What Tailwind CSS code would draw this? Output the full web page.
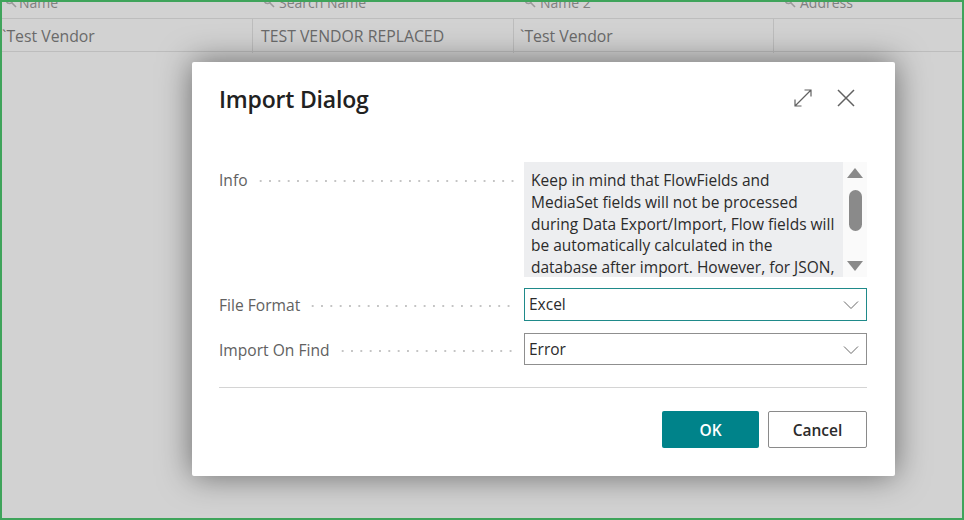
<!DOCTYPE html>
<html lang="en">
<head>
  <meta charset="UTF-8">
  <title>Import Dialog</title>
  <script src="https://cdn.jsdelivr.net/npm/@tailwindcss/browser@4"></script>
</head>
<body class="w-[964px] h-[520px] overflow-hidden font-['Open_Sans','Noto_Sans',sans-serif]">
  <div class="relative w-full h-full border-2 border-[#3fa45b] bg-[#d2d2d2] overflow-hidden">

    <!-- Grid behind the dialog -->
    <div class="-mt-[13px] text-[#6a6a6a]">
      <div class="grid grid-cols-[251px_261px_260px_1fr] h-[30px] border-b border-[#bdbdbd] text-[14px] leading-[27px] text-[#808080]">
        <div class="flex items-start gap-[2px] pl-[3px]">
          <svg class="w-[12px] h-[12px] mt-[7px]" viewBox="0 0 12 12" fill="none" stroke="#9a9a9a" stroke-width="1.6"><circle cx="4.5" cy="4.5" r="3"/><path d="M7 7l4 4"/></svg>
          <span>Name</span>
        </div>
        <div class="flex items-start gap-1 pl-[10px]">
          <svg class="w-[12px] h-[12px] mt-[7px]" viewBox="0 0 12 12" fill="none" stroke="#9a9a9a" stroke-width="1.6"><circle cx="4.5" cy="4.5" r="3"/><path d="M7 7l4 4"/></svg>
          <span>Search Name</span>
        </div>
        <div class="flex items-start gap-1 pl-[10px]">
          <svg class="w-[12px] h-[12px] mt-[7px]" viewBox="0 0 12 12" fill="none" stroke="#9a9a9a" stroke-width="1.6"><circle cx="4.5" cy="4.5" r="3"/><path d="M7 7l4 4"/></svg>
          <span>Name 2</span>
        </div>
        <div class="flex items-start gap-1 pl-[10px]">
          <svg class="w-[12px] h-[12px] mt-[7px]" viewBox="0 0 12 12" fill="none" stroke="#9a9a9a" stroke-width="1.6"><circle cx="4.5" cy="4.5" r="3"/><path d="M7 7l4 4"/></svg>
          <span>Address</span>
        </div>
      </div>
      <div class="grid grid-cols-[251px_261px_260px_1fr] h-[33px] border-b border-[#bdbdbd] text-[15.8px] leading-[34px]">
        <div class="border-r border-[#bdbdbd]">`Test Vendor</div>
        <div class="pl-[8px] border-r border-[#bdbdbd]">TEST VENDOR REPLACED</div>
        <div class="pl-[6px] border-r border-[#bdbdbd]">`Test Vendor</div>
        <div></div>
      </div>
    </div>

    <!-- Dialog -->
    <div class="absolute left-[190px] top-[60px] w-[703px] h-[414px] bg-white rounded-[2px] shadow-[0_0_32px_rgba(0,0,0,0.5)] pl-[27px] pr-[28px] pt-[20px]">
      <div class="flex items-center justify-between h-[34px]">
        <h2 class="text-[23px] font-semibold text-[#212121] leading-[34px] tracking-[-0.2px]">Import Dialog</h2>
        <div class="flex items-center gap-[25px] pr-[12px] -mt-[2px] text-[#616161]">
          <svg class="w-[18px] h-[18px]" viewBox="0 0 18 18" fill="none" stroke="currentColor" stroke-width="1.2"><path d="M1 17L17 1M10.5 1H17v6.5M1 10.5V17h6.5"/></svg>
          <svg class="w-[18px] h-[18px]" viewBox="0 0 18 18" fill="none" stroke="currentColor" stroke-width="1.5"><path d="M1 1l16 16M17 1L1 17"/></svg>
        </div>
      </div>

      <div class="mt-[46px] flex flex-col">
        <!-- Info -->
        <div class="flex h-[115px]">
          <div class="w-[305px] h-[37px] flex items-center gap-[8px] text-[15.6px] text-[#616161]">
            <span>Info</span>
            <span class="flex-1 h-[4px] mr-[10px] bg-[radial-gradient(circle,#c4c4c4_1px,transparent_1.3px)] bg-[length:9.33px_4px]"></span>
          </div>
          <div class="w-[319px] h-full bg-[#edeef0] overflow-hidden px-[7px] pt-[8px] text-[15.5px] leading-[21.8px] text-[#2b2b2b]">
            Keep in mind that FlowFields and MediaSet fields will not be processed during Data Export/Import, Flow fields will be automatically calculated in the database after import. However, for JSON,
          </div>
          <div class="w-[24px] h-full flex flex-col items-center bg-[#fafafa]">
            <div class="mt-[6px] w-0 h-0 border-x-[8px] border-x-transparent border-b-[10px] border-b-[#8a8a8a]"></div>
            <div class="mt-[12px] w-[13px] h-[41px] rounded-full bg-[#8a8a8a]"></div>
            <div class="mt-[30px] w-0 h-0 border-x-[8px] border-x-transparent border-t-[10px] border-t-[#8a8a8a]"></div>
          </div>
        </div>

        <!-- File Format -->
        <div class="flex mt-[11px] h-[33px]">
          <div class="w-[305px] flex items-center gap-[8px] pt-[2px] text-[15.6px] text-[#616161]">
            <span>File Format</span>
            <span class="flex-1 h-[4px] mr-[10px] bg-[radial-gradient(circle,#c4c4c4_1px,transparent_1.3px)] bg-[length:9.33px_4px]"></span>
          </div>
          <div class="w-[343px] flex items-center justify-between border border-[#1f8a8a] pl-[4px] pr-[7px] pt-[1px] text-[15.5px] text-[#2b2b2b]">
            <span>Excel</span>
            <svg class="w-[16px] h-[10px]" viewBox="0 0 16 10" fill="none" stroke="#6a6a6a" stroke-width="1"><path d="M1 1.5l7 7 7-7"/></svg>
          </div>
        </div>

        <!-- Import On Find -->
        <div class="flex mt-[12px] h-[32px]">
          <div class="w-[305px] flex items-center gap-[8px] pt-[3px] text-[15.6px] text-[#616161]">
            <span>Import On Find</span>
            <span class="flex-1 h-[4px] mr-[10px] bg-[radial-gradient(circle,#c4c4c4_1px,transparent_1.3px)] bg-[length:9.33px_4px]"></span>
          </div>
          <div class="w-[343px] flex items-center justify-between border border-[#8f8f8f] pl-[4px] pr-[7px] pt-[2px] text-[15.5px] text-[#2b2b2b]">
            <span>Error</span>
            <svg class="w-[16px] h-[10px]" viewBox="0 0 16 10" fill="none" stroke="#6a6a6a" stroke-width="1"><path d="M1 1.5l7 7 7-7"/></svg>
          </div>
        </div>
      </div>

      <div class="mt-[22px] border-t border-[#d4d4d4]"></div>

      <div class="mt-[23px] flex justify-end gap-[9px]">
        <button class="w-[97px] h-[37px] pt-[2px] rounded-[2px] bg-[#00838a] text-white text-[15.5px] font-semibold">OK</button>
        <button class="w-[99px] h-[37px] pt-[2px] rounded-[2px] border border-[#8a8a8a] bg-white text-[#2b2b2b] text-[15.5px] font-semibold">Cancel</button>
      </div>
    </div>
  </div>
</body>
</html>
